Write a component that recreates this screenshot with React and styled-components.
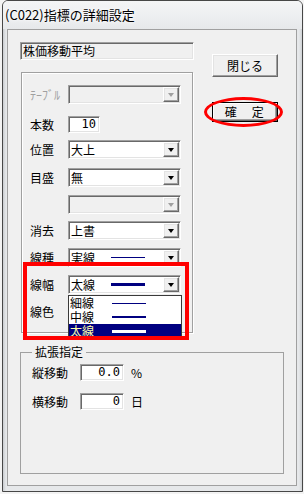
import React from 'react';
import styled, { createGlobalStyle } from 'styled-components';

const GlobalStyle = createGlobalStyle`
  html, body {
    margin: 0;
    padding: 0;
    background: #f3f3f3;
  }
  body {
    font-family: "Noto Sans CJK JP", "Liberation Sans", sans-serif;
    font-size: 12px;
    color: #000;
  }
`;

// Windows classic 3D edges
const sunken = `
  border: 1px solid;
  border-color: #a0a0a0 #ffffff #ffffff #a0a0a0;
  box-shadow: inset 1px 1px 0 #696969, inset -1px -1px 0 #e3e3e3;
`;

const raised = `
  border: 1px solid;
  border-color: #ffffff #696969 #696969 #ffffff;
  box-shadow: inset -1px -1px 0 #a0a0a0, inset 1px 1px 0 #e3e3e3;
`;

const Window = styled.div`
  box-sizing: border-box;
  width: 301px;
  height: 492px;
  margin-left: 2px;
  display: flex;
  flex-direction: column;
  border: 1px solid #474747;
  border-radius: 6px 6px 0 0;
  overflow: hidden;
  background:
    radial-gradient(ellipse 26px 8px at 180px 0px, rgba(110, 200, 100, 0.6), transparent),
    linear-gradient(90deg, #c9ccd0 0px, #e6e8ea 3px, #e6e8ea 296px, #cfd2d5 100%);
`;

const TitleBar = styled.div`
  height: 28px;
  display: flex;
  align-items: center;
  padding-left: 2px;
  background: linear-gradient(180deg, #f4f5f6 0%, #eceef0 60%, #e6e8ea 100%);
`;

const Title = styled.span`
  font-size: 13px;
  line-height: 16px;
  color: #000;
  text-shadow: 0 0 6px #fff, 0 0 3px #fff;
`;

const Client = styled.div`
  flex: 1;
  margin: 0 5px 5px 4px;
  padding: 12px 0 0 12px;
  border: 1px solid #a0a0a0;
  background: #f0f0f0;
`;

const TopArea = styled.div`
  display: flex;
  align-items: flex-start;
`;

const LeftCol = styled.div`
  width: 174px;
  display: flex;
  flex-direction: column;
`;

const NameField = styled.div`
  box-sizing: border-box;
  height: 18px;
  ${sunken}
  background: #f0f0f0;
  padding: 0 2px;
  display: flex;
  align-items: center;
  line-height: 14px;
`;

const Frame = styled.div`
  position: relative;
  box-sizing: border-box;
  margin: 12px 0 0 1px;
  width: 172px;
  height: 261px;
  padding-left: 8px;
  border: 1px solid #a0a0a0;
  box-shadow: 1px 1px 0 #fff, inset 1px 1px 0 #fff;
  display: flex;
  flex-direction: column;
`;

const Row = styled.div`
  position: relative;
  display: flex;
  align-items: center;
  min-height: 19px;
  margin-top: ${(p) => p.$mt}px;
`;

const Label = styled.span`
  flex: none;
  width: ${(p) => p.$w || 38}px;
  line-height: 14px;
  color: ${(p) => (p.$disabled ? '#a0a0a0' : '#000')};
`;

const Combo = styled.div`
  box-sizing: border-box;
  width: 113px;
  height: 19px;
  padding: 1px;
  ${sunken}
  background: ${(p) => (p.$disabled ? '#f0f0f0' : '#fff')};
  display: flex;
  align-items: stretch;
`;

const Value = styled.span`
  flex: 1;
  display: flex;
  align-items: center;
  padding-left: 1px;
  line-height: 14px;
`;

const DropButton = styled.span`
  box-sizing: border-box;
  width: 16px;
  flex: none;
  background: #f0f0f0;
  ${raised}
  display: flex;
  align-items: center;
  justify-content: center;

  &::after {
    content: '';
    width: 0;
    height: 0;
    border-left: 3.5px solid transparent;
    border-right: 3.5px solid transparent;
    border-top: 4px solid ${(p) => (p.$disabled ? '#a0a0a0' : '#000')};
  }
`;

const Stroke = styled.span`
  flex: none;
  width: 34px;
  height: ${(p) => p.$h}px;
  margin-left: ${(p) => p.$ml}px;
  background: ${(p) => p.$color || '#000080'};
`;

const DropList = styled.div`
  position: absolute;
  left: 38px;
  top: 20px;
  z-index: 2;
  box-sizing: border-box;
  width: 114px;
  border: 1px solid #3a3a3a;
  background: #fff;
`;

const ListItem = styled.div`
  height: 14px;
  display: flex;
  align-items: center;
  padding-left: 1px;
  line-height: 12px;
  background: ${(p) => (p.$selected ? '#000080' : 'transparent')};
  color: ${(p) => (p.$selected ? '#ffffa8' : '#000')};
`;

const NumInput = styled.div`
  box-sizing: border-box;
  width: ${(p) => p.$w}px;
  height: 17px;
  ${sunken}
  background: #fff;
  padding-right: 3px;
  display: flex;
  align-items: center;
  justify-content: flex-end;
  line-height: 13px;
  font-family: "DejaVu Sans Mono", "Liberation Mono", monospace;
  font-size: 12px;
`;

const RedBox = styled.div`
  position: absolute;
  left: 1px;
  top: 189px;
  z-index: 3;
  box-sizing: border-box;
  width: 166px;
  height: 78px;
  border: 4px solid #ff0000;
`;

const RightCol = styled.div`
  margin-left: 18px;
  display: flex;
  flex-direction: column;
`;

const Button = styled.div`
  position: relative;
  box-sizing: border-box;
  width: 66px;
  height: ${(p) => p.$h}px;
  margin-top: ${(p) => p.$mt}px;
  background: #f0f0f0;
  ${(p) =>
    p.$default
      ? `border: 1px solid #000; box-shadow: inset 1px 1px 0 #fff, inset -1px -1px 0 #696969, inset -2px -2px 0 #a0a0a0;`
      : raised}
  display: flex;
  align-items: center;
  justify-content: center;
  line-height: 14px;
  letter-spacing: ${(p) => p.$spacing || 0}px;
`;

const Ellipse = styled.span`
  position: absolute;
  left: -9px;
  top: -6px;
  box-sizing: border-box;
  width: 79px;
  height: 30px;
  border: 3px solid #ff0000;
  border-radius: 50%;
`;

const ExtGroup = styled.fieldset`
  box-sizing: border-box;
  margin: 12px 0 0 0;
  width: 264px;
  height: 129px;
  min-width: 0;
  padding: 0 0 0 11px;
  border: 1px solid #a0a0a0;
`;

const Legend = styled.legend`
  padding: 0 3px;
  line-height: 14px;
  font-size: 12px;
`;

const Unit = styled.span`
  margin-left: 7px;
  line-height: 14px;
`;

const lineItems = [
  { label: '細線', h: 1 },
  { label: '中線', h: 2 },
  { label: '太線', h: 3, selected: true },
];

const ComboBox = ({ value, disabled, children }) => (
  <Combo $disabled={disabled}>
    <Value>
      {value}
      {children}
    </Value>
    <DropButton $disabled={disabled} />
  </Combo>
);

const App = () => (
  <>
    <GlobalStyle />
    <Window>
      <TitleBar>
        <Title>(C022)指標の詳細設定</Title>
      </TitleBar>
      <Client>
        <TopArea>
          <LeftCol>
            <NameField>株価移動平均</NameField>
            <Frame>
              <Row $mt={12}>
                <Label $disabled>ﾃｰﾌﾞﾙ</Label>
                <ComboBox disabled />
              </Row>
              <Row $mt={11}>
                <Label>本数</Label>
                <NumInput $w={32}>10</NumInput>
              </Row>
              <Row $mt={6}>
                <Label>位置</Label>
                <ComboBox value="大上" />
              </Row>
              <Row $mt={9}>
                <Label>目盛</Label>
                <ComboBox value="無" />
              </Row>
              <Row $mt={8}>
                <Label />
                <ComboBox disabled />
              </Row>
              <Row $mt={7}>
                <Label>消去</Label>
                <ComboBox value="上書" />
              </Row>
              <Row $mt={8}>
                <Label>線種</Label>
                <ComboBox value="実線">
                  <Stroke $h={1} $ml={16} />
                </ComboBox>
              </Row>
              <Row $mt={8}>
                <Label>線幅</Label>
                <ComboBox value="太線">
                  <Stroke $h={3} $ml={16} />
                </ComboBox>
                <DropList>
                  {lineItems.map((item) => (
                    <ListItem key={item.label} $selected={item.selected}>
                      {item.label}
                      <Stroke
                        $h={item.h}
                        $ml={18}
                        $color={item.selected ? '#ffffff' : '#000080'}
                      />
                    </ListItem>
                  ))}
                </DropList>
              </Row>
              <Row $mt={8}>
                <Label>線色</Label>
              </Row>
              <RedBox />
            </Frame>
          </LeftCol>
          <RightCol>
            <Button $h={23} $mt={12}>閉じる</Button>
            <Button $h={20} $mt={25} $default $spacing={1.5}>
              確　定
              <Ellipse />
            </Button>
          </RightCol>
        </TopArea>
        <ExtGroup>
          <Legend>拡張指定</Legend>
          <Row $mt={4}>
            <Label $w={48}>縦移動</Label>
            <NumInput $w={44}>0.0</NumInput>
            <Unit>%</Unit>
          </Row>
          <Row $mt={10}>
            <Label $w={48}>横移動</Label>
            <NumInput $w={44}>0</NumInput>
            <Unit>日</Unit>
          </Row>
        </ExtGroup>
      </Client>
    </Window>
  </>
);

export default App;
